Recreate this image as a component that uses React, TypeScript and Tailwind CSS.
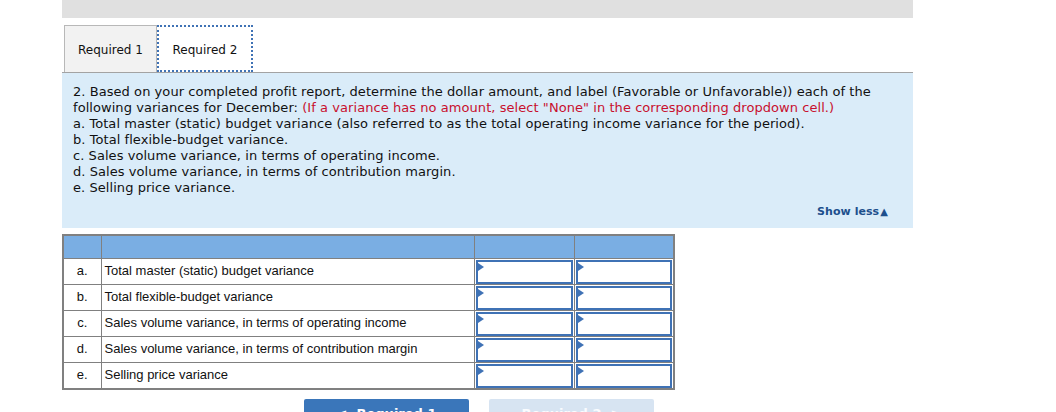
const rows = [
  { key: 'a.', label: 'Total master (static) budget variance' },
  { key: 'b.', label: 'Total flexible-budget variance' },
  { key: 'c.', label: 'Sales volume variance, in terms of operating income' },
  { key: 'd.', label: 'Sales volume variance, in terms of contribution margin' },
  { key: 'e.', label: 'Selling price variance' },
]

function InputCell() {
  return (
    <td className="h-[26px] border border-[#808080] p-0 align-top">
      <div className="relative mx-px mt-px h-[24px] border-2 border-[#3f72b5] bg-white">
        <span className="absolute left-0 top-[1px] h-0 w-0 border-y-[4px] border-l-[6px] border-y-transparent border-l-[#3f72b5]" />
      </div>
    </td>
  )
}

export default function App() {
  return (
    <div className="h-[412px] w-[1056px] overflow-hidden bg-white font-['DejaVu_Sans',Verdana,sans-serif] text-[#111]">
      <div className="ml-[62px] w-[851px]">
        <div className="h-[18px] bg-[#e0e0e0]" />

        <div className="mt-[7px] flex h-[47px] pl-[2px]">
          <div className="flex w-[93px] items-center justify-center border border-b-0 border-[#b8b8b8] bg-[#f2f2f2] pt-[2px] text-[12px]">
            Required 1
          </div>
          <div className="flex w-[96px] items-center justify-center border-2 border-b-2 border-dotted border-[#3f72b5] bg-white pt-[2px] text-[12px]">
            Required 2
          </div>
        </div>

        <div className="border-t border-[#a3a3a3] bg-[#daecf9] pb-[8px] pl-[11px] pr-[25px] pt-[11px] text-[13px] leading-[16px] tracking-[0.06px]">
          <p>
            2. Based on your completed profit report, determine the dollar amount, and label (Favorable or Unfavorable)) each of the
            following variances for December:{' '}
            <span className="text-[#c8102e]">
              (If a variance has no amount, select "None" in the corresponding dropdown cell.)
            </span>
          </p>
          <p>a. Total master (static) budget variance (also referred to as the total operating income variance for the period).</p>
          <p>b. Total flexible-budget variance.</p>
          <p>c. Sales volume variance, in terms of operating income.</p>
          <p>d. Sales volume variance, in terms of contribution margin.</p>
          <p>e. Selling price variance.</p>
          <div className="mt-[8px] flex justify-end text-[11px] font-bold text-[#1d4f8c]">
            Show less<span className="ml-px text-[10px]">▲</span>
          </div>
        </div>

        <table className="mt-[6px] w-[611px] table-fixed border-collapse border-2 border-[#808080] font-['Liberation_Sans',Arial,sans-serif] text-[13px]">
          <colgroup>
            <col className="w-[38px]" />
            <col className="w-[373px]" />
            <col className="w-[100px]" />
            <col className="w-[100px]" />
          </colgroup>
          <thead>
            <tr className="h-[23px] bg-[#7aaee3]">
              <th className="border border-[#808080]" />
              <th className="border border-[#808080]" />
              <th className="border border-[#808080]" />
              <th className="border border-[#808080]" />
            </tr>
          </thead>
          <tbody>
            {rows.map((r) => (
              <tr key={r.key}>
                <td className="h-[26px] border border-[#808080] text-center">{r.key}</td>
                <td className="border border-[#808080] pl-[3px]">{r.label}</td>
                <InputCell />
                <InputCell />
              </tr>
            ))}
          </tbody>
        </table>

        <div className="ml-[242px] mt-[9px] flex gap-[20px] font-['DejaVu_Sans',Verdana,sans-serif] text-[13px] font-bold">
          <button className="flex h-[34px] w-[165px] items-start justify-center rounded-[2px] bg-[#3a76ba] pt-[5px] text-white">
            &lt;&nbsp;&nbsp;Required 1
          </button>
          <button className="flex h-[34px] w-[165px] items-start justify-center rounded-[2px] bg-[#d7e4f2] pt-[5px] text-[#fafcff]">
            Required 2&nbsp;&nbsp;&gt;
          </button>
        </div>
      </div>
    </div>
  )
}
